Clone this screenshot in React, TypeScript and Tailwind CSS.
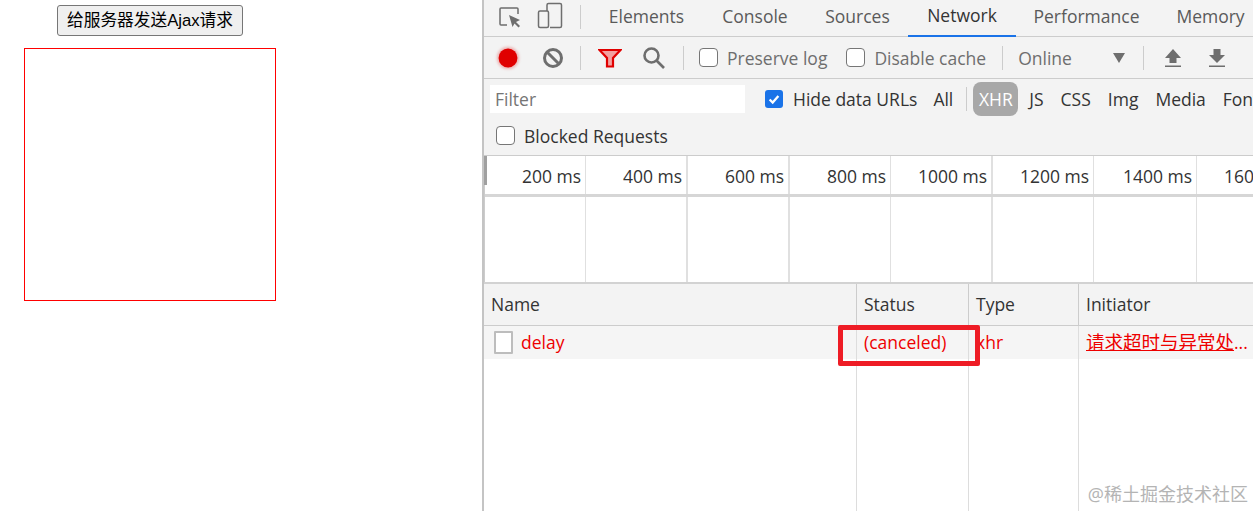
const ui = "[font-family:'Open_Sans','Noto_Sans_CJK_SC',sans-serif]";

const tabs = ['Elements', 'Console', 'Sources', 'Network', 'Performance', 'Memory'];
const tabWidths = [113, 104, 101, 108, 141, 107];
const ticks = [
  { label: '200 ms', w: 'w-[101px]', b: 'border-r' },
  { label: '400 ms', w: 'w-[102px]', b: 'border-r-2' },
  { label: '600 ms', w: 'w-[102px]', b: 'border-r-2' },
  { label: '800 ms', w: 'w-[101px]', b: 'border-r' },
  { label: '1000 ms', w: 'w-[102px]', b: 'border-r-2' },
  { label: '1200 ms', w: 'w-[101px]', b: 'border-r' },
  { label: '1400 ms', w: 'w-[103px]', b: 'border-r' },
];
const filters = ['JS', 'CSS', 'Img', 'Media', 'Font'];
const cols = 'grid grid-cols-[373px_112px_110px_175px]';

const Sep = ({ h = 'h-6' }: { h?: string }) => <div className={`w-px ${h} bg-[#cccccc] shrink-0`} />;

const Check = ({ label, on, dim }: { label: string; on?: boolean; dim?: boolean }) => (
  <label className={`flex items-center ${on ? 'gap-[10px]' : 'gap-[9px]'} ${dim ? 'text-[#6e6e6e]' : 'text-[#333333]'}`}>
    {on ? (
      <span className="w-[18px] h-[18px] rounded-[3px] bg-[#1a73e8] flex items-center justify-center">
        <svg viewBox="0 0 16 16" className="w-[14px] h-[14px]" fill="none" stroke="white" strokeWidth="2.6">
          <path d="M3 8.5 L6.5 12 L13 4.5" />
        </svg>
      </span>
    ) : (
      <span className="w-[19px] h-[19px] rounded-[4px] bg-white border border-[#767676]" />
    )}
    {label}
  </label>
);

const DevTools = () => (
  <div className={`flex-1 min-w-0 overflow-hidden flex flex-col bg-[#f3f3f3] text-[17.5px] leading-6 ${ui}`}>
    {/* tabs */}
    <div className="h-[37px] shrink-0 flex items-center border-b border-[#cccccc] pl-[14px] whitespace-nowrap">
      <svg viewBox="0 0 24 24" className="w-[24px] h-[24px] shrink-0 -mt-[3px] text-[#6e6e6e]" fill="none" stroke="currentColor" strokeWidth="1.5">
        <path d="M9 20 H3 a1 1 0 0 1-1-1 V4 a1 1 0 0 1 1-1 H19 a1 1 0 0 1 1 1 V9" />
        <path d="M11 10 L22 15 L18 17 L22 21 L20.5 22.5 L16.5 18.5 L14.5 22 Z" fill="currentColor" stroke="none" />
      </svg>
      <svg viewBox="0 0 26 28" className="w-[26px] h-[28px] shrink-0 ml-[15px] -mt-[4px] text-[#6e6e6e]" fill="none" stroke="currentColor" strokeWidth="1.5">
        <path d="M10 9 V3 a1.5 1.5 0 0 1 1.500-1.500 H23 A1.500 1.500 0 0 1 24.500 3 V24 A1.500 1.500 0 0 1 23 25.500 H13" />
        <rect x="1.500" y="9" width="10" height="16.500" rx="1.500" />
      </svg>
      <div className="ml-[17px] mr-[9px] -mt-[2px] shrink-0"><Sep h="h-[24px]" /></div>
      {tabs.map((t, i) => (
        <div
          key={t}
          style={{ width: tabWidths[i] }}
          className={`h-[37px] shrink-0 flex items-center justify-center pb-[5px] ${
            t === 'Network' ? 'text-[#333333] border-b-2 border-[#1a73e8]' : 'text-[#5a5a5a]'
          }`}
        >
          {t}
        </div>
      ))}
    </div>

    {/* toolbar */}
    <div className="h-[42px] shrink-0 flex items-center border-b border-[#cccccc] pl-[13px] whitespace-nowrap text-[#6e6e6e]">
      <span className="w-[22px] h-[22px] shrink-0 rounded-full bg-[#e00000] shadow-[0_0_3px_2px_rgba(224,0,0,0.25)] scale-[0.86]" />
      <svg viewBox="0 0 22 22" className="w-[22px] h-[22px] shrink-0 ml-[23px]" fill="none" stroke="#6e6e6e" strokeWidth="3">
        <circle cx="11" cy="11" r="8.500" />
        <path d="M5 5 L17 17" />
      </svg>
      <div className="ml-[16px] shrink-0"><Sep /></div>
      <svg viewBox="0 0 24 20" className="w-[24px] h-[20px] shrink-0 ml-[17px]" fill="#f2a0a0" stroke="#e00000" strokeWidth="2.200">
        <path d="M1.500 2 H22.500 L15 10 V18.500 H9 V10 Z" />
      </svg>
      <svg viewBox="0 0 24 24" className="w-[24px] h-[24px] shrink-0 ml-[20px]" fill="none" stroke="#6e6e6e" strokeWidth="2.600">
        <circle cx="9.500" cy="9.500" r="7" />
        <path d="M14.500 14.500 L22 22" />
      </svg>
      <div className="ml-[17px] shrink-0"><Sep /></div>
      <div className="ml-[15px] shrink-0"><Check label="Preserve log" dim /></div>
      <div className="ml-[19px] shrink-0"><Check label="Disable cache" dim /></div>
      <div className="ml-[16px] shrink-0"><Sep /></div>
      <span className="ml-[15px] w-[95px] shrink-0">Online</span>
      <span className="w-0 h-0 shrink-0 border-x-[6px] border-x-transparent border-t-[10px] border-t-[#6e6e6e]" />
      <div className="ml-[18px] shrink-0"><Sep /></div>
      <svg viewBox="0 0 18 20" className="w-[18px] h-[20px] shrink-0 ml-[20px]" fill="#6e6e6e">
        <path d="M9 1 L17 10 H12.500 V15 H5.500 V10 H1 Z" />
        <rect x="1" y="17.500" width="16" height="1.500" />
      </svg>
      <svg viewBox="0 0 18 20" className="w-[18px] h-[20px] shrink-0 ml-[26px]" fill="#6e6e6e">
        <path d="M9 15 L17 7 H12.500 V1 H5.500 V7 H1 Z" />
        <rect x="1" y="17.500" width="16" height="1.500" />
      </svg>
    </div>

    {/* filter */}
    <div className="h-[39px] shrink-0 flex items-center pl-[6px] whitespace-nowrap text-[#333333]">
      <div className="w-[255px] h-7 shrink-0 bg-white pl-[5px] flex items-center text-[#757575]">Filter</div>
      <div className="ml-[20px] shrink-0"><Check label="Hide data URLs" on /></div>
      <span className="ml-[16px] shrink-0">All</span>
      <div className="ml-[13px] shrink-0"><Sep /></div>
      <span className="ml-[6px] h-[34px] w-[45px] shrink-0 rounded-[8px] bg-[#a8a8a8] text-white flex items-center justify-center">XHR</span>
      <div className="flex items-center gap-[17px] ml-[11px] shrink-0">
        {filters.map((f) => <span key={f}>{f}</span>)}
      </div>
    </div>
    <div className="h-[38px] shrink-0 flex items-center pl-[12px] border-b border-[#cccccc] pb-[2px]">
      <Check label="Blocked Requests" />
    </div>

    {/* overview */}
    <div className="h-[126px] shrink-0 bg-white flex flex-col border-l border-[#cccccc] whitespace-nowrap text-[#333333] relative">
      <div className="absolute -left-px top-0 w-[3px] h-[29px] bg-[#a0a0a0]" />
      <div className="h-[38px] flex shrink-0 border-b-[3px] border-[#d6d6d6] box-content">
        {ticks.map((t) => (
          <div key={t.label} className={`${t.w} shrink-0 h-full text-right pr-[4px] pt-[8px] border-[#e0e0e0] ${t.b}`}>
            {t.label}
          </div>
        ))}
        <div className="pl-[27px] pt-[8px]">1600 ms</div>
      </div>
      <div className="flex-1 flex">
        {ticks.map((t) => (
          <div key={t.label} className={`${t.w} shrink-0 h-full border-[#e0e0e0] ${t.b}`} />
        ))}
      </div>
    </div>

    {/* requests table */}
    <div className="flex-1 flex flex-col bg-white border-t-2 border-[#d2d2d2] whitespace-nowrap relative">
      <div className={`${cols} h-[42px] shrink-0 bg-[#f3f3f3] border-b border-[#cccccc] text-[#333333]`}>
        <div className="pl-[7px] pt-[8px] border-r border-[#cccccc]">Name</div>
        <div className="pl-[7px] pt-[8px] border-r border-[#cccccc]">Status</div>
        <div className="pl-[7px] pt-[8px] border-r border-[#cccccc]">Type</div>
        <div className="pl-[7px] pt-[8px]">Initiator</div>
      </div>
      <div className={`${cols} h-[33px] shrink-0 bg-[#f5f5f5] text-[#ee0000]`}>
        <div className="flex items-center pl-[10px] pb-[1px] border-r border-[#dddddd]">
          <span className="w-[19px] h-[23px] bg-white border-2 border-[#bdbdbd] rounded-[1px] mr-[8px]" />
          delay
        </div>
        <div className="flex items-center pl-[7px] pb-[1px] border-r border-[#dddddd]">(canceled)</div>
        <div className="flex items-center pl-[7px] pb-[1px] border-r border-[#dddddd]">xhr</div>
        <div className="flex items-center pl-[7px] pb-[1px] overflow-hidden">
          <span className="underline text-[18.5px]">请求超时与异常处</span>...
        </div>
      </div>
      <div className={`${cols} flex-1`}>
        <div className="border-r border-[#dddddd]" />
        <div className="border-r border-[#dddddd]" />
        <div className="border-r border-[#dddddd]" />
        <div />
      </div>
      {/* red annotation box */}
      <div className="absolute left-[354px] top-[41px] w-[142px] h-[41px] border-[5px] border-[#ee1c25] rounded-[2px]" />
      <div className="absolute right-[5px] bottom-[5px] text-[#b4b4b4] text-[18px] leading-6">@稀土掘金技术社区</div>
    </div>
  </div>
);

export default function App() {
  return (
    <div className="w-[1253px] h-[511px] flex overflow-hidden bg-white">
      <div className="w-[482px] shrink-0 flex flex-col items-start pl-[24px] pt-[5px] [font-family:'Liberation_Sans','Noto_Sans_CJK_SC',sans-serif]">
        <button className="ml-[33px] h-[31px] w-[186px] pt-[1px] bg-[#efefef] border border-[#767676] rounded-[3px] text-[16.7px] text-black whitespace-nowrap">
          给服务器发送Ajax请求
        </button>
        <div className="mt-[12px] w-[252px] h-[253px] border border-[#ff0000]" />
      </div>
      <div className="w-[2px] shrink-0 bg-[#c4c4c4]" />
      <DevTools />
    </div>
  );
}
